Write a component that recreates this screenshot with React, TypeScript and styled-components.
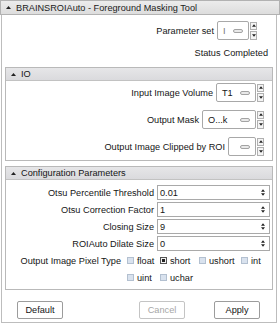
import React from 'react';
import styled, { createGlobalStyle } from 'styled-components';

const Global = createGlobalStyle`
  html, body { margin: 0; padding: 0; background: #ffffff; }
  body {
    font-family: "Liberation Sans", Arial, Helvetica, sans-serif;
    font-size: 9.2px;
    color: #151515;
  }
  * { box-sizing: border-box; }
`;

const Page = styled.div`
  width: 280px;
  height: 327px;
  background: #ffffff;
  display: flex;
  flex-direction: column;
`;

const TitleBar = styled.div`
  height: 15px;
  display: flex;
  align-items: center;
  gap: 5px;
  padding-left: 5px;
  background: linear-gradient(#ececec, #dddddd);
  border: 1px solid #b2b2b2;
  color: #1c1c1c;
  white-space: nowrap;
`;

const Body = styled.div`
  flex: 1;
  margin: 0 3px 4px 1px;
  border: 1px solid #bdbdbd;
  border-top: none;
  padding: 6px 3px 0 3px;
  display: flex;
  flex-direction: column;
`;

const RightRow = styled.div<{ $pr: number; $h?: number; $mt?: number }>`
  display: flex;
  justify-content: flex-end;
  align-items: center;
  gap: 3px;
  height: ${p => p.$h ?? 19}px;
  margin-top: ${p => p.$mt ?? 0}px;
  padding-right: ${p => p.$pr}px;
  white-space: nowrap;
`;

const Section = styled.div<{ $mt: number }>`
  margin-top: ${p => p.$mt}px;
  border: 1px solid #b9b9b9;
  display: flex;
  flex-direction: column;
`;

const SectionHeader = styled.div`
  height: 13px;
  display: flex;
  align-items: center;
  gap: 5px;
  padding-left: 5px;
  background: linear-gradient(#e6e6e8, #dadadd);
  border-bottom: 1px solid #c2c2c2;
`;

const IOContent = styled.div`
  padding: 2px 8px 4px 0;
  display: flex;
  flex-direction: column;
  gap: 8px;
`;

const ComboWrap = styled.div`
  display: flex;
  align-items: center;
  gap: 1px;
  height: 19px;
`;

const Combo = styled.div<{ $w: number }>`
  width: ${p => p.$w}px;
  height: 19px;
  border: 1px solid #a8a8a8;
  border-radius: 2px;
  background: #ffffff;
  display: flex;
  align-items: center;
  justify-content: space-between;
  padding: 0 5px 0 5px;
  overflow: hidden;
`;

const ComboText = styled.span<{ $light?: boolean }>`
  color: ${p => (p.$light ? '#777' : '#151515')};
  font-weight: ${p => (p.$light ? 300 : 400)};
`;

const ComboBar = styled.span`
  width: 10px;
  height: 4px;
  border: 1px solid #a3a3a3;
  border-radius: 2px;
  background: #e9e9e9;
  flex: none;
`;

const Spinner = styled.div`
  width: 7px;
  height: 18px;
  display: flex;
  flex-direction: column;
  gap: 1px;
`;

const SpinBtn = styled.div`
  flex: 1;
  border: 1px solid #b0b0b0;
  background: #f4f4f4;
  display: flex;
  align-items: center;
  justify-content: center;
`;

const ConfigContent = styled.div`
  padding: 5px 2px 4px 0;
  display: flex;
  flex-direction: column;
  gap: 2px;
`;

const FieldRow = styled.div`
  display: grid;
  grid-template-columns: 148px 1fr;
  column-gap: 3px;
  align-items: center;
  height: 15px;
`;

const Label = styled.span`
  text-align: right;
  white-space: nowrap;
`;

const SpinBox = styled.div`
  height: 15px;
  border: 1px solid #a9a9a9;
  background: #ffffff;
  display: flex;
  align-items: center;
  justify-content: space-between;
  padding: 0 4px 0 2px;
`;

const MiniArrows = styled.div`
  display: flex;
  flex-direction: column;
  align-items: center;
  gap: 1px;
`;

const PixelGrid = styled.div`
  display: grid;
  grid-template-columns: 121px 33px 39px 42px auto;
  column-gap: 0;
  row-gap: 2px;
  grid-auto-rows: 15px;
  align-items: center;
`;

const PixelLabel = styled.span`
  grid-column: 1;
  text-align: right;
  padding-right: 6px;
  white-space: nowrap;
`;

const Check = styled.label<{ $col: number }>`
  grid-column: ${p => p.$col};
  display: flex;
  align-items: center;
  gap: 3px;
  white-space: nowrap;
`;

const Box = styled.span<{ $on?: boolean }>`
  width: 7px;
  height: 7px;
  flex: none;
  border: 1px solid ${p => (p.$on ? '#555' : '#b3c0d0')};
  background: ${p => (p.$on ? '#f2f2f2' : '#d9e2ee')};
  display: flex;
  align-items: center;
  justify-content: center;
  &::after {
    content: '';
    display: ${p => (p.$on ? 'block' : 'none')};
    width: 3px;
    height: 3px;
    background: #222;
  }
`;

const ButtonRow = styled.div`
  margin-top: 11px;
  display: flex;
  align-items: center;
  padding: 0 13px 0 12px;
`;

const Spacer = styled.div`
  flex: 1;
`;

const Button = styled.div<{ $disabled?: boolean; $ml?: number }>`
  width: 46px;
  height: 18px;
  margin-left: ${p => p.$ml ?? 0}px;
  border: 1px solid ${p => (p.$disabled ? '#c4c4c4' : '#9c9c9c')};
  border-radius: 2px;
  background: #ffffff;
  color: ${p => (p.$disabled ? '#a6a6a6' : '#151515')};
  display: flex;
  align-items: center;
  justify-content: center;
`;

const Up = ({ w = 5 }: { w?: number }) => (
  <svg width={w} height={3} viewBox="0 0 5 3" style={{ display: 'block' }}>
    <polygon points="2.5,0 5,3 0,3" fill="#222" />
  </svg>
);

const Down = ({ w = 5 }: { w?: number }) => (
  <svg width={w} height={3} viewBox="0 0 5 3" style={{ display: 'block' }}>
    <polygon points="0,0 5,0 2.5,3" fill="#222" />
  </svg>
);

const Collapse = () => (
  <svg width={5} height={3} viewBox="0 0 5 3" style={{ display: 'block' }}>
    <polygon points="2.5,0 5,3 0,3" fill="#222" />
  </svg>
);

const ComboField = ({ w, text, light }: { w: number; text: string; light?: boolean }) => (
  <ComboWrap>
    <Combo $w={w}>
      <ComboText $light={light}>{text}</ComboText>
      <ComboBar />
    </Combo>
    <Spinner>
      <SpinBtn><Up w={4} /></SpinBtn>
      <SpinBtn><Down w={4} /></SpinBtn>
    </Spinner>
  </ComboWrap>
);

const NumField = ({ label, value }: { label: string; value: string }) => (
  <FieldRow>
    <Label>{label}</Label>
    <SpinBox>
      <span>{value}</span>
      <MiniArrows>
        <Up w={4} />
        <Down w={4} />
      </MiniArrows>
    </SpinBox>
  </FieldRow>
);

export default function App() {
  return (
    <Page>
      <Global />
      <TitleBar>
        <Collapse />
        <span>BRAINSROIAuto - Foreground Masking Tool</span>
      </TitleBar>
      <Body>
        <RightRow $pr={16}>
          <span>Parameter set</span>
          <ComboField w={32} text="I" light />
        </RightRow>
        <RightRow $pr={5} $h={12} $mt={7}>
          <span>Status</span>
          <span>Completed</span>
        </RightRow>

        <Section $mt={8}>
          <SectionHeader>
            <Collapse />
            <span>IO</span>
          </SectionHeader>
          <IOContent>
            <RightRow $pr={0}>
              <span>Input Image Volume</span>
              <ComboField w={40} text="T1" />
            </RightRow>
            <RightRow $pr={0}>
              <span>Output Mask</span>
              <ComboField w={54} text="O...k" />
            </RightRow>
            <RightRow $pr={0}>
              <span>Output Image Clipped by ROI</span>
              <ComboField w={28} text="" />
            </RightRow>
          </IOContent>
        </Section>

        <Section $mt={5}>
          <SectionHeader>
            <Collapse />
            <span>Configuration Parameters</span>
          </SectionHeader>
          <ConfigContent>
            <NumField label="Otsu Percentile Threshold" value="0.01" />
            <NumField label="Otsu Correction Factor" value="1" />
            <NumField label="Closing Size" value="9" />
            <NumField label="ROIAuto Dilate Size" value="0" />
            <PixelGrid>
              <PixelLabel>Output Image Pixel Type</PixelLabel>
              <Check $col={2}><Box />float</Check>
              <Check $col={3}><Box $on />short</Check>
              <Check $col={4}><Box />ushort</Check>
              <Check $col={5}><Box />int</Check>
              <Check $col={2}><Box />uint</Check>
              <Check $col={3}><Box />uchar</Check>
            </PixelGrid>
          </ConfigContent>
        </Section>

        <ButtonRow>
          <Button>Default</Button>
          <Spacer />
          <Button $disabled>Cancel</Button>
          <Button $ml={29}>Apply</Button>
        </ButtonRow>
      </Body>
    </Page>
  );
}
